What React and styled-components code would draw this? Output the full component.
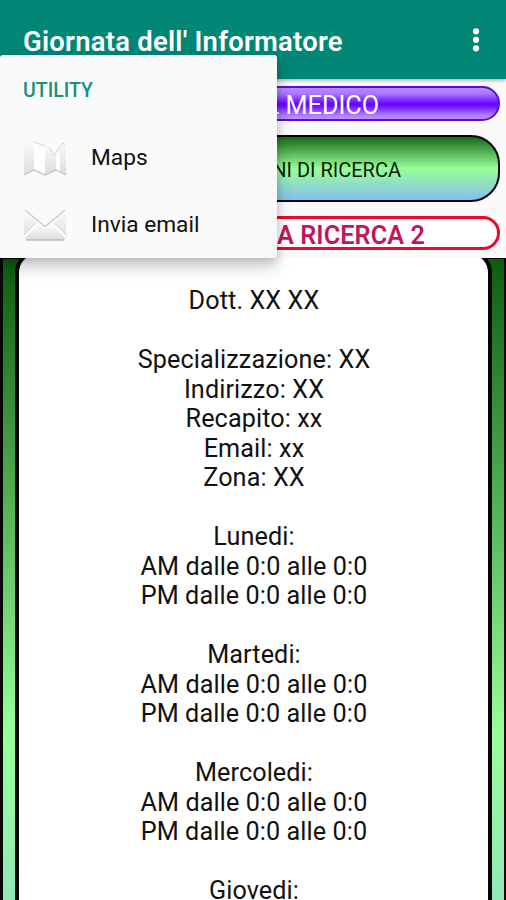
import React from "react";
import styled, { createGlobalStyle } from "styled-components";

const GlobalStyle = createGlobalStyle`
  * { box-sizing: border-box; }
  html, body { margin: 0; padding: 0; background: #fafafa; overflow: hidden; }
  body { font-family: Roboto, "Noto Sans", sans-serif; color: #111; }
`;

const Screen = styled.div`
  position: relative;
  width: 506px;
  height: 900px;
  overflow: hidden;
  display: flex;
  flex-direction: column;
  background: #fafafa;
`;

const AppBar = styled.header`
  flex: none;
  height: 79px;
  padding: 5px 23px 0;
  display: flex;
  align-items: center;
  justify-content: space-between;
  background: #028675;
  box-shadow: 0 1px 4px rgba(0, 0, 0, 0.38);
`;

const Title = styled.h1`
  margin: 0;
  font-size: 27.4px;
  line-height: 34px;
  font-weight: 600;
  letter-spacing: 0.26px;
  color: #fff;
  white-space: pre;
`;

const MoreButton = styled.button`
  margin: -4px 2px 0 0;
  padding: 0;
  border: 0;
  width: 10px;
  height: 26px;
  background: none;
  svg { display: block; }
`;

const Buttons = styled.div`
  flex: none;
  display: flex;
  flex-direction: column;
  height: 179px;
  padding: 7px 6px 0;
`;

const PillButton = styled.button`
  flex: none;
  display: flex;
  align-items: center;
  justify-content: flex-end;
  font-family: inherit;
  white-space: pre;
  line-height: 1;
`;

const PurpleButton = styled(PillButton)`
  height: 35px;
  padding: 5px 119px 0 0;
  border: 2px solid #5a0be0;
  border-radius: 18px;
  background: linear-gradient(#b98cff 0%, #ab78ff 18%, #6a08ff 50%, #6a08ff 56%, #b07fff 88%, #bb90ff 100%);
  color: #fff;
  font-size: 25.2px;
`;

const GreenButton = styled(PillButton)`
  margin-top: 14px;
  height: 67px;
  padding: 2px 97px 0 0;
  border: 2.5px solid #080808;
  border-radius: 29px;
  background: linear-gradient(#176817 0%, #98ff98 50%, #87bdf0 100%);
  color: #0a1a0a;
  font-size: 20px;
`;

const RedButton = styled(PillButton)`
  margin-top: 14px;
  height: 34px;
  padding: 5px 72px 0 0;
  border: 3.5px solid #ed0827;
  border-radius: 17px;
  background: #fff;
  color: #c2155b;
  font-size: 25.2px;
  font-weight: 600;
  letter-spacing: 0.1px;
`;

const PanelClip = styled.div`
  flex: none;
  height: 642px;
  overflow: hidden;
`;

const Panel = styled.main`
  flex: none;
  height: 950px;
  padding: 0 12px;
  border: solid #050505;
  border-width: 1px 2px 3px 3px;
  background: linear-gradient(#0c5c10 0%, #98ff98 50%, #87bdf0 100%);
`;

const Sheet = styled.section`
  height: 930px;
  margin-top: -7px;
  padding-top: 31px;
  border: 4px solid #050505;
  border-top-color: transparent;
  border-top-width: 3px;
  border-radius: 20px;
  background: #fff;
  background-clip: padding-box;
`;

const Line = styled.p`
  margin: 0;
  padding-left: 1px;
  height: 29.5px;
  line-height: 29.5px;
  font-size: 25.2px;
  letter-spacing: 0.1px;
  text-align: center;
  white-space: pre;
`;

const Menu = styled.nav`
  position: absolute;
  left: 0;
  top: 55px;
  width: 276.5px;
  height: 203px;
  padding: 2px 23px 0;
  border-radius: 3px;
  background: #fafafa;
  box-shadow: 0 10px 16px rgba(0, 0, 0, 0.17), 0 3px 10px rgba(0, 0, 0, 0.16);
`;

const MenuHeading = styled.div`
  height: 67px;
  line-height: 68px;
  font-size: 19.5px;
  font-weight: 500;
  color: #16917c;
`;

const MenuItem = styled.div`
  height: 67.5px;
  display: flex;
  align-items: center;
  gap: 24px;
  font-size: 22.7px;
  line-height: 30px;
  svg { display: block; flex: none; }
`;

function MapIcon() {
  return (
    <svg width="44" height="44" viewBox="0 0 44 44">
      <defs>
        <linearGradient id="fold" x1="0" y1="0" x2="0" y2="1">
          <stop offset="0" stopColor="#f9f9f9" />
          <stop offset="1" stopColor="#dcdcdc" />
        </linearGradient>
      </defs>
      <path d="M1 10L11 7V34L1 39Z" fill="url(#fold)" />
      <path d="M11 6L22 10V39L11 34Z" fill="#fdfdfd" />
      <path d="M22 10L31 19L33 15V34L22 39Z" fill="url(#fold)" />
      <path d="M33 15L37 12V36L33 34Z" fill="#fdfdfd" />
      <path d="M37 12L43 8V39L37 36Z" fill="url(#fold)" />
      <path d="M1 39L11 34L22 39L33 34L43 39" fill="none" stroke="#c2c2c2" strokeWidth="1.3" />
      <path d="M11 6L22 10M26 11L31 19L40 7L42 9" fill="none" stroke="#d8d8d8" strokeWidth="1.1" />
    </svg>
  );
}

function MailIcon() {
  return (
    <svg width="44" height="44" viewBox="0 0 44 44">
      <defs>
        <linearGradient id="paper" x1="0" y1="0" x2="0" y2="1">
          <stop offset="0" stopColor="#fcfcfc" />
          <stop offset="1" stopColor="#dddddd" />
        </linearGradient>
      </defs>
      <path d="M1 8L15 21L1 34Z" fill="url(#paper)" />
      <path d="M43 8L30 21L43 34Z" fill="url(#paper)" />
      <path d="M15 21L22 25L30 21L43 34L41 37H3L1 34Z" fill="url(#paper)" />
      <path d="M1 34L14 21M43 34L30 21" stroke="#fff" strokeWidth="2.4" />
      <path d="M0 33L13 20M44 33L31 20" stroke="#d2d2d2" strokeWidth="0.8" />
      <path d="M2 7L20 22Q22 24 24 22L42 7" fill="none" stroke="#cbcbcb" strokeWidth="1.3" />
      <path d="M3 37H41" stroke="#bdbdbd" strokeWidth="1.5" />
    </svg>
  );
}

const lines = [
  "Dott. XX XX",
  "",
  "Specializzazione: XX",
  "Indirizzo: XX",
  "Recapito: xx",
  "Email: xx",
  "Zona: XX",
  "",
  "Lunedi:",
  "AM dalle 0:0 alle 0:0",
  "PM dalle 0:0 alle 0:0",
  "",
  "Martedi:",
  "AM dalle 0:0 alle 0:0",
  "PM dalle 0:0 alle 0:0",
  "",
  "Mercoledi:",
  "AM dalle 0:0 alle 0:0",
  "PM dalle 0:0 alle 0:0",
  "",
  "Giovedi:",
];

export default function App() {
  return (
    <Screen>
      <GlobalStyle />
      <AppBar>
        <Title>Giornata dell' Informatore</Title>
        <MoreButton aria-label="Menu">
          <svg width="10" height="26" viewBox="0 0 10 26" fill="#fff">
            <circle cx="5" cy="4.3" r="3.1" />
            <circle cx="5" cy="12.8" r="3.1" />
            <circle cx="5" cy="21.3" r="3.1" />
          </svg>
        </MoreButton>
      </AppBar>
      <Buttons>
        <PurpleButton>L MEDICO</PurpleButton>
        <GreenButton>NI DI RICERCA</GreenButton>
        <RedButton>A RICERCA 2</RedButton>
      </Buttons>
      <PanelClip>
        <Panel>
          <Sheet>
            {lines.map((text, i) => (
              <Line key={i}>{text}</Line>
            ))}
          </Sheet>
        </Panel>
      </PanelClip>
      <Menu>
        <MenuHeading>UTILITY</MenuHeading>
        <MenuItem><MapIcon />Maps</MenuItem>
        <MenuItem><MailIcon />Invia email</MenuItem>
      </Menu>
    </Screen>
  );
}
